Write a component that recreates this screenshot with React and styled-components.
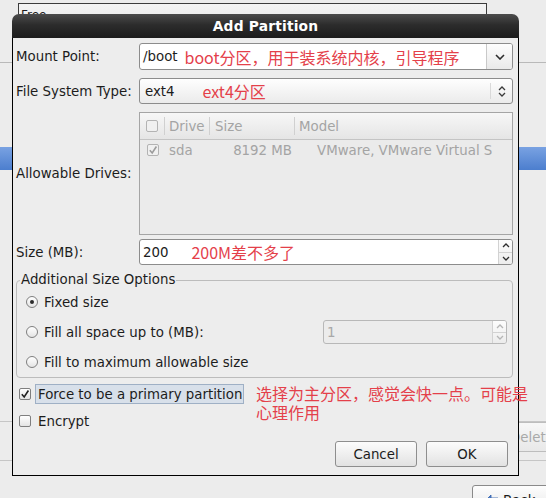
import React from 'react';
import styled, { createGlobalStyle } from 'styled-components';

const GlobalStyle = createGlobalStyle`
  html, body {
    margin: 0;
    padding: 0;
  }
  body {
    background: #ececec;
    font-family: "DejaVu Sans", "Liberation Sans", sans-serif;
    font-size: 13.35px;
    color: #1c1c1c;
  }
`;

// backdrop: the installer window behind the dialog
const Screen = styled.div`
  position: relative;
  width: 546px;
  height: 498px;
  overflow: hidden;
  background: #ececec;
  display: flex;
  flex-direction: column;
`;

const PartitionList = styled.div`
  flex: none;
  margin: 3px 0 0 18px;
  width: 469px;
  height: 40px;
  box-sizing: border-box;
  border: 1px solid #3c3c3c;
  background: linear-gradient(#f4f4f4, #e2e2e2);
  padding: 4px 2px;
  font-size: 12px;
`;

const Rule = styled.div`
  flex: none;
  height: 1px;
  margin-top: ${p => p.$top}px;
  background: #b9b9b9;
`;

const SelectionBar = styled.div`
  flex: none;
  height: 23px;
  margin-top: 84px;
  background: linear-gradient(#79a2e2, #4c7ece);
`;

const Toolbar = styled.div`
  flex: none;
  margin-top: 251px;
  height: 38px;
  border-top: 1px solid #c6c6c6;
  border-bottom: 1px solid #c6c6c6;
  padding-left: 492px;
  display: flex;
  align-items: flex-start;
`;

const GhostButton = styled.div`
  flex: none;
  width: 84px;
  height: 30px;
  box-sizing: border-box;
  border: 1px solid #bdbdbd;
  border-radius: 3px;
  background: linear-gradient(#f7f7f7, #e8e8e8);
  color: #a9a9a9;
  display: flex;
  align-items: center;
  padding-left: 17px;
`;

const BackRow = styled.div`
  flex: none;
  margin-top: 24px;
  padding-left: 472px;
  display: flex;
`;

const BackButton = styled.div`
  flex: none;
  width: 90px;
  height: 30px;
  box-sizing: border-box;
  border: 1px solid #8a8a8a;
  border-radius: 3px;
  background: linear-gradient(#fdfdfd, #e6e6e6);
  display: flex;
  align-items: center;
  gap: 4px;
  padding-left: 12px;
`;

// the dialog itself
const Dialog = styled.div`
  position: absolute;
  left: 12px;
  top: 14px;
  width: 507px;
  display: flex;
  flex-direction: column;
`;

const TitleBar = styled.div`
  height: 24px;
  border-radius: 7px 7px 0 0;
  background: linear-gradient(#4c4c4c, #2c2c2c 45%, #1c1c1c);
  color: #fff;
  font-weight: bold;
  font-size: 13.8px;
  display: flex;
  align-items: center;
  justify-content: center;
  letter-spacing: 0.2px;
`;

const Body = styled.div`
  background: #ededed;
  border: 1px solid #000;
  border-top: none;
  padding: 5px 5px 8px 3px;
  display: flex;
  flex-direction: column;
`;

const FieldRow = styled.div`
  display: grid;
  grid-template-columns: 123px 1fr;
  align-items: center;
  margin-top: ${p => p.$top || 0}px;
`;

const Label = styled.div`
  white-space: nowrap;
`;

const ComboEntry = styled.div`
  display: flex;
  height: 27px;
  box-sizing: border-box;
  border: 1px solid #8c8c8c;
  border-radius: 3px;
  background: #fff;
  overflow: hidden;
`;

const EntryText = styled.div`
  flex: 1;
  display: flex;
  align-items: center;
  padding-left: 3px;
  white-space: nowrap;
`;

const ComboButton = styled.div`
  flex: none;
  width: 25px;
  border-left: 1px solid #c9c9c9;
  background: linear-gradient(#fdfdfd, #e9e9e9);
  display: flex;
  align-items: center;
  justify-content: center;
`;

const ComboBox = styled.div`
  display: flex;
  height: 26px;
  box-sizing: border-box;
  border: 1px solid #8c8c8c;
  border-radius: 3px;
  background: linear-gradient(#fefefe, #ebebeb);
  padding-left: 2px;
`;

const ComboArrows = styled.div`
  flex: none;
  width: 21px;
  margin: 4px 0;
  border-left: 1px solid #d9d9d9;
  display: flex;
  align-items: center;
  justify-content: center;
`;

const Note = styled.span`
  font-family: "Noto Sans CJK SC", "Noto Sans", sans-serif;
  font-size: 16px;
  color: #e4404a;
  margin-left: ${p => p.$gap || 0}px;
  white-space: nowrap;
`;

const DriveTree = styled.div`
  height: 123px;
  box-sizing: border-box;
  border: 1px solid #a5a5a5;
  background: #ebebeb;
  color: #a4a4a4;
  overflow: hidden;
`;

const TreeGrid = styled.div`
  display: grid;
  grid-template-columns: 25px 45px 85px 1fr;
  height: ${p => p.$height}px;
  ${p => p.$header && `
    background: linear-gradient(#f7f7f7, #e5e5e5);
    border-bottom: 1px solid #c4c4c4;
  `}
`;

const HeaderCell = styled.div`
  display: flex;
  align-items: center;
  justify-content: ${p => (p.$center ? 'center' : 'flex-start')};
  padding-left: ${p => p.$pad || 0}px;
  border-right: 1px solid #d0d0d0;
  margin: 4px 0;
  &:last-child {
    border-right: none;
  }
`;

const Cell = styled.div`
  display: flex;
  align-items: center;
  justify-content: ${p => p.$align || 'flex-start'};
  padding-left: ${p => p.$pad || 0}px;
  padding-right: ${p => p.$padRight || 0}px;
  white-space: nowrap;
  overflow: hidden;
`;

const SpinEntry = styled.div`
  display: flex;
  height: ${p => p.$height || 26}px;
  box-sizing: border-box;
  border: 1px solid ${p => (p.$disabled ? '#b8b8b8' : '#8c8c8c')};
  border-radius: 3px;
  background: ${p => (p.$disabled ? '#ececec' : '#fff')};
  color: ${p => (p.$disabled ? '#a8a8a8' : 'inherit')};
  overflow: hidden;
`;

const SpinButtons = styled.div`
  flex: none;
  width: 13px;
  border-left: 1px solid #d2d2d2;
  display: flex;
  flex-direction: column;
  background: linear-gradient(#fdfdfd, #ececec);
`;

const SpinHalf = styled.div`
  flex: 1;
  display: flex;
  align-items: center;
  justify-content: center;
  & + & {
    border-top: 1px solid #d2d2d2;
  }
`;

const Frame = styled.fieldset`
  margin: 7px 0 0;
  min-width: 0;
  border: 1px solid #bcbcbc;
  border-radius: 4px;
  padding: 4px 5px 5px 9px;
  display: flex;
  flex-direction: column;
  gap: 8px;
`;

const FrameLabel = styled.legend`
  padding: 0 1px;
  margin-left: -6px;
  line-height: 16px;
`;

const OptionRow = styled.div`
  display: flex;
  align-items: center;
  height: ${p => p.$height || 20}px;
  gap: 6px;
`;

const RadioDot = styled.span`
  flex: none;
  width: 12px;
  height: 12px;
  box-sizing: border-box;
  border: 1px solid #7f7f7f;
  border-radius: 50%;
  background: linear-gradient(#ffffff, #e4e4e4);
  display: flex;
  align-items: center;
  justify-content: center;
  &::after {
    content: '';
    width: 4px;
    height: 4px;
    border-radius: 50%;
    background: ${p => (p.$checked ? '#2b2b2b' : 'transparent')};
  }
`;

const SideSpin = styled.div`
  margin-left: auto;
  width: 184px;
`;

const CheckRow = styled.div`
  position: relative;
  display: flex;
  align-items: center;
  height: ${p => p.$height}px;
  margin-top: ${p => p.$top}px;
  padding-left: 3px;
`;

const Box = styled.span`
  flex: none;
  width: 12px;
  height: 12px;
  box-sizing: border-box;
  border: 1px solid ${p => (p.$dim ? '#b3b3b3' : '#7f7f7f')};
  border-radius: 2px;
  background: ${p => (p.$dim ? '#f0f0f0' : 'linear-gradient(#ffffff, #e4e4e4)')};
  display: flex;
  align-items: center;
  justify-content: center;
`;

const FocusLabel = styled.span`
  margin-left: 4px;
  height: 20px;
  box-sizing: border-box;
  padding: 0 1px 0 2px;
  border: 1px solid #9fb0c5;
  background: #d8e0ea;
  display: flex;
  align-items: center;
  white-space: nowrap;
`;

const PlainLabel = styled.span`
  margin-left: 7px;
`;

const FloatingNote = styled(Note)`
  position: absolute;
  left: 240px;
  top: 0;
  line-height: 19px;
`;

const ButtonRow = styled.div`
  display: flex;
  justify-content: flex-end;
  gap: 9px;
  margin-top: 11px;
  padding-right: 5px;
`;

const PushButton = styled.div`
  width: 82px;
  height: 26px;
  box-sizing: border-box;
  border: 1px solid #8e8e8e;
  border-radius: 3px;
  background: linear-gradient(#fcfcfc, #e2e2e2);
  display: flex;
  align-items: center;
  justify-content: center;
`;

const ChevronDown = () => (
  <svg width="10" height="6" viewBox="0 0 10 6">
    <path d="M1 1l4 4 4-4" fill="none" stroke="#2e2e2e" strokeWidth="1.6" />
  </svg>
);

const UpDown = () => (
  <svg width="8" height="13" viewBox="0 0 8 13">
    <path d="M1 5l3-3 3 3M1 8l3 3 3-3" fill="none" stroke="#3a3a3a" strokeWidth="1.3" />
  </svg>
);

const Arrow = ({ up, dim }) => (
  <svg width="8" height="5" viewBox="0 0 8 5">
    <path
      d={up ? 'M1 4l3-3 3 3' : 'M1 1l3 3 3-3'}
      fill="none"
      stroke={dim ? '#b5b5b5' : '#2e2e2e'}
      strokeWidth="1.3"
    />
  </svg>
);

const Check = ({ color = '#222' }) => (
  <svg width="10" height="10" viewBox="0 0 10 10">
    <path d="M1.8 5.2l2.4 2.8 4.2-6.5" fill="none" stroke={color} strokeWidth="1.6" />
  </svg>
);

const Spin = ({ value, disabled, height }) => (
  <SpinEntry $disabled={disabled} $height={height}>
    <EntryText>{value}</EntryText>
    <SpinButtons>
      <SpinHalf><Arrow up dim={disabled} /></SpinHalf>
      <SpinHalf><Arrow dim={disabled} /></SpinHalf>
    </SpinButtons>
  </SpinEntry>
);

const BackArrow = () => (
  <svg width="14" height="12" viewBox="0 0 14 12">
    <path d="M6 1L1 6l5 5V8h7V4H6z" fill="#4f7fcc" stroke="#2f5ea8" strokeWidth="0.8" />
  </svg>
);

const App = () => {
  return (
    <Screen>
      <GlobalStyle />
      <PartitionList>Free</PartitionList>
      <Rule $top={19} />
      <SelectionBar />
      <Toolbar>
        <GhostButton>Delete</GhostButton>
      </Toolbar>
      <BackRow>
        <BackButton>
          <BackArrow />
          Back
        </BackButton>
      </BackRow>

      <Dialog>
        <TitleBar>Add Partition</TitleBar>
        <Body>
          <FieldRow>
            <Label>Mount Point:</Label>
            <ComboEntry>
              <EntryText>
                /boot
                <Note $gap={7}>boot分区，用于装系统内核，引导程序</Note>
              </EntryText>
              <ComboButton><ChevronDown /></ComboButton>
            </ComboEntry>
          </FieldRow>

          <FieldRow $top={8}>
            <Label>File System Type:</Label>
            <ComboBox>
              <EntryText>
                ext4
                <Note $gap={28}>ext4分区</Note>
              </EntryText>
              <ComboArrows><UpDown /></ComboArrows>
            </ComboBox>
          </FieldRow>

          <FieldRow $top={8}>
            <Label>Allowable Drives:</Label>
            <DriveTree>
              <TreeGrid $header $height={26}>
                <HeaderCell $center><Box $dim /></HeaderCell>
                <HeaderCell $pad={4}>Drive</HeaderCell>
                <HeaderCell $pad={5}>Size</HeaderCell>
                <HeaderCell $pad={4}>Model</HeaderCell>
              </TreeGrid>
              <TreeGrid $height={20}>
                <Cell $align="center"><Box $dim><Check color="#9c9c9c" /></Box></Cell>
                <Cell $pad={4}>sda</Cell>
                <Cell $align="flex-end" $padRight={3}>8192 MB</Cell>
                <Cell $pad={22}>VMware, VMware Virtual S</Cell>
              </TreeGrid>
            </DriveTree>
          </FieldRow>

          <FieldRow $top={4}>
            <Label>Size (MB):</Label>
            <SpinEntry>
              <EntryText>
                200
                <Note $gap={23}>200M差不多了</Note>
              </EntryText>
              <SpinButtons>
                <SpinHalf><Arrow up /></SpinHalf>
                <SpinHalf><Arrow /></SpinHalf>
              </SpinButtons>
            </SpinEntry>
          </FieldRow>

          <Frame>
            <FrameLabel>Additional Size Options</FrameLabel>
            <OptionRow>
              <RadioDot $checked />
              Fixed size
            </OptionRow>
            <OptionRow $height={24}>
              <RadioDot />
              Fill all space up to (MB):
              <SideSpin>
                <Spin value="1" disabled height={24} />
              </SideSpin>
            </OptionRow>
            <OptionRow>
              <RadioDot />
              Fill to maximum allowable size
            </OptionRow>
          </Frame>

          <CheckRow $height={20} $top={6}>
            <Box><Check /></Box>
            <FocusLabel>Force to be a primary partition</FocusLabel>
            <FloatingNote>
              选择为主分区，感觉会快一点。可能是
              <br />
              心理作用
            </FloatingNote>
          </CheckRow>

          <CheckRow $height={18} $top={8}>
            <Box />
            <PlainLabel>Encrypt</PlainLabel>
          </CheckRow>

          <ButtonRow>
            <PushButton>Cancel</PushButton>
            <PushButton>OK</PushButton>
          </ButtonRow>
        </Body>
      </Dialog>
    </Screen>
  );
};

export default App;
